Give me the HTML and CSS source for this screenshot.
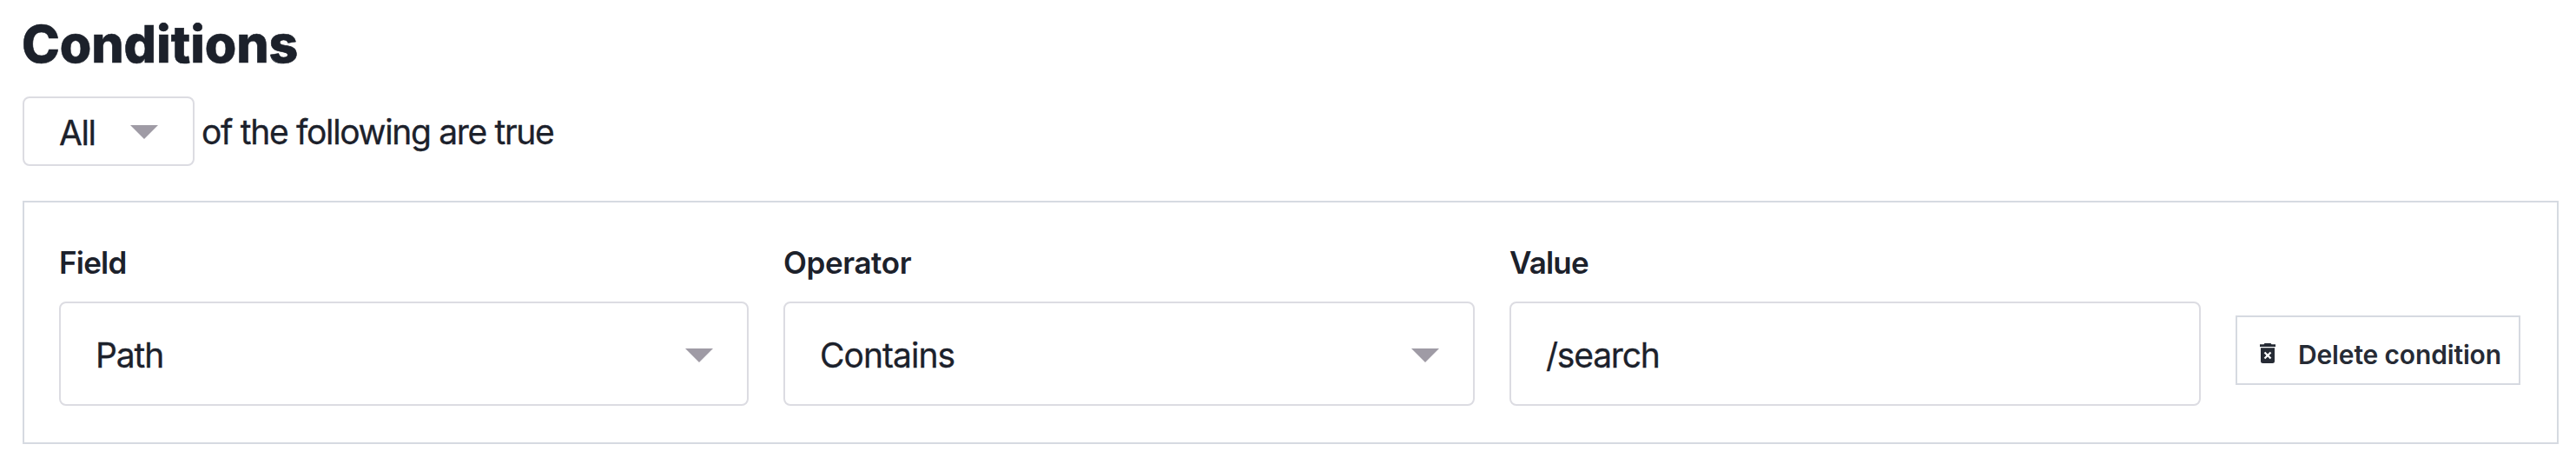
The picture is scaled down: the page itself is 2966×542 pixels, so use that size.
FILE: index.html
```
<!DOCTYPE html>
<html lang="en">
<head>
<meta charset="utf-8">
<title>Conditions</title>
<link rel="stylesheet" href="styles.css">
</head>
<body>
<main class="page">
  <h2 class="title">Conditions</h2>
  <div class="match">
    <div class="select select-small"><span class="all">All</span><svg class="arrow" viewBox="0 0 32 16"><path d="M0 0H32L16 16Z"/></svg></div>
    <span class="match-text">of the following are true</span>
  </div>
  <section class="card">
    <div class="field">
      <span class="label label-field">Field</span>
      <div class="select"><span class="path">Path</span><svg class="arrow" viewBox="0 0 32 16"><path d="M0 0H32L16 16Z"/></svg></div>
    </div>
    <div class="field">
      <span class="label label-operator">Operator</span>
      <div class="select"><span class="contains">Contains</span><svg class="arrow" viewBox="0 0 32 16"><path d="M0 0H32L16 16Z"/></svg></div>
    </div>
    <div class="field">
      <span class="label label-value">Value</span>
      <div class="select"><span class="search">/search</span></div>
    </div>
    <button class="delete" type="button">
      <svg class="trash" viewBox="0 0 18 23"><path d="M5.5 0H12.5L13.5 1.3H18V4H0V1.3H4.5Z"/><path fill-rule="evenodd" d="M1 5.3H17V20.5Q17 23 14.5 23H3.5Q1 23 1 20.5ZM4.7 11.3L7.4 14L4.7 16.7L6.3 18.3L9 15.6L11.7 18.3L13.3 16.7L10.6 14L13.3 11.3L11.7 9.7L9 12.4L6.3 9.7Z"/></svg>
      <span class="delete-text">Delete condition</span>
    </button>
  </section>
</main>
</body>
</html>
```
FILE: styles.css
```
* { box-sizing: border-box; }
body {
  margin: 0;
  background: #fff;
  color: #1c212b;
  font-family: Inter, "Liberation Sans", sans-serif;
}
.page { padding: 21px 20px 0 26px; }
.title {
  margin: 0 0 0 -1px;
  height: 60px;
  font-size: 59px;
  line-height: 60px;
  font-weight: 800;
  letter-spacing: -0.1px;
  -webkit-text-stroke: 0.6px currentColor;
  white-space: nowrap;
}
.match {
  display: flex;
  align-items: center;
  gap: 8px;
  height: 80px;
  margin-top: 30px;
}
.match-text, .select {
  font-size: 39px;
  line-height: 48px;
  letter-spacing: -1.33px;
  -webkit-text-stroke: 0.3px currentColor;
  white-space: nowrap;
}
.match-text { padding-top: 2px; }
.select {
  display: flex;
  align-items: center;
  justify-content: space-between;
  height: 120px;
  padding: 4px 39px 0 40px;
  border: 2px solid #dcdce2;
  border-radius: 8px;
}
.select-small { width: 198px; height: 80px; padding-right: 40px; }
.all { letter-spacing: -1.4px; }
.path { letter-spacing: -1.1px; }
.contains { letter-spacing: -0.95px; }
.search { letter-spacing: -1.2px; }
.arrow { width: 32px; height: 16px; fill: #9f9ba5; }
.select-small .arrow { margin-top: -2px; }
.card {
  display: grid;
  grid-template-columns: 794px 796px 796px 328px;
  column-gap: 40px;
  align-items: start;
  height: 280px;
  margin-top: 40px;
  padding: 48px 42px 0 40px;
  border: 2px solid #d6dae1;
}
.label {
  display: block;
  height: 66px;
  font-size: 35px;
  line-height: 42px;
  font-weight: 600;
  letter-spacing: -0.4px;
}
.label-field, .label-value { letter-spacing: -0.8px; }
.delete {
  display: flex;
  align-items: center;
  width: 328px;
  height: 80px;
  margin: 82px 0 0;
  padding: 6px 0 0 26px;
  border: 2px solid #d6dae1;
  background: #fff;
  color: #262b35;
  font: 600 30px/40px Inter, "Liberation Sans", sans-serif;
  letter-spacing: -0.15px;
  white-space: nowrap;
}
.delete-text { padding-top: 4px; }
.trash { width: 18px; height: 23px; margin-right: 26px; fill: #262b35; }
```
